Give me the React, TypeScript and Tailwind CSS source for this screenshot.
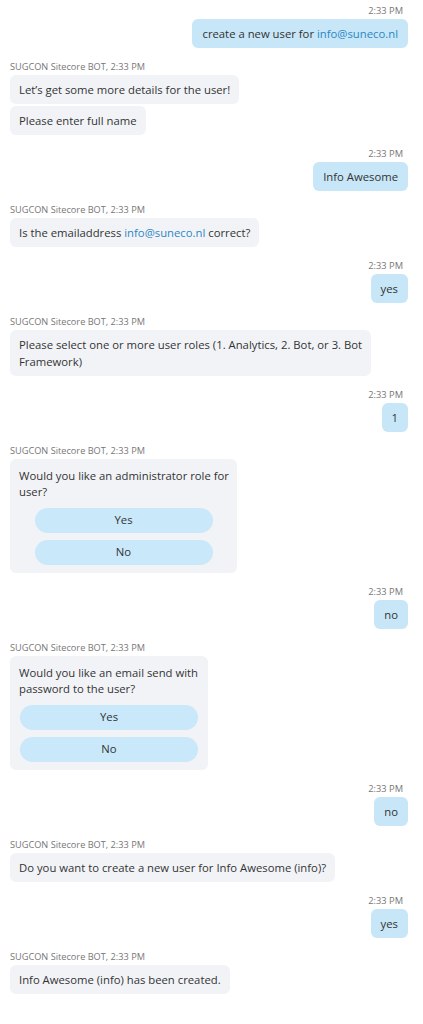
import React from 'react'

const Stamp = () => (
  <div className="text-[9.3px] leading-[14px] text-[#777] pr-[5px]">2:33 PM</div>
)

const Label = () => (
  <div className="text-[9.2px] leading-[14px] text-[#777]">SUGCON Sitecore BOT, 2:33 PM</div>
)

const UserMsg = ({ children }: { children: React.ReactNode }) => (
  <div className="flex flex-col items-end pr-[15px] mt-[12px] first:mt-0">
    <Stamp />
    <div className="mt-[1px] bg-[#c7e6f7] rounded-[6px] px-[10px] py-[6px] leading-[17px] whitespace-nowrap">
      {children}
    </div>
  </div>
)

const BotMsg = ({ children }: { children: React.ReactNode }) => (
  <div className="flex flex-col items-start pl-[10px] mt-[12px]">
    <Label />
    <div className="mt-[1px] flex flex-col items-start gap-[2px]">{children}</div>
  </div>
)

const Bubble = ({ children }: { children: React.ReactNode }) => (
  <div className="bg-[#f2f3f7] rounded-[6px] px-[9px] py-[6px] leading-[17px] whitespace-nowrap">{children}</div>
)

const Choice = ({ text, width }: { text: React.ReactNode; width: string }) => (
  <div className={`bg-[#f2f3f7] rounded-[6px] px-[9px] pt-[9px] pb-[8px] flex flex-col ${width}`}>
    <p className="leading-[16px] whitespace-nowrap">{text}</p>
    <button className="mt-[8px] h-[25px] w-[178px] self-center rounded-full bg-[#c9e8fa] text-[#333]">Yes</button>
    <button className="mt-[7px] h-[25px] w-[178px] self-center rounded-full bg-[#c9e8fa] text-[#333]">No</button>
  </div>
)

const Link = ({ children }: { children: React.ReactNode }) => (
  <span className="text-[#2a87c6]">{children}</span>
)

export default function App() {
  return (
    <div className="w-[423px] min-h-[1024px] bg-white pt-[4px] text-[11.3px] text-[#333] font-['Open_Sans',sans-serif]">
      <UserMsg>
        create a new user for <Link>info@suneco.nl</Link>
      </UserMsg>

      <BotMsg>
        <Bubble>Let’s get some more details for the user!</Bubble>
        <Bubble>Please enter full name</Bubble>
      </BotMsg>

      <UserMsg>Info Awesome</UserMsg>

      <BotMsg>
        <Bubble>
          Is the emailaddress <Link>info@suneco.nl</Link> correct?
        </Bubble>
      </BotMsg>

      <UserMsg>yes</UserMsg>

      <BotMsg>
        <Bubble>
          Please select one or more user roles (1. Analytics, 2. Bot, or 3. Bot
          <br />
          Framework)
        </Bubble>
      </BotMsg>

      <UserMsg>1</UserMsg>

      <BotMsg>
        <Choice
          width="w-[227px]"
          text={
            <>
              Would you like an administrator role for
              <br />
              user?
            </>
          }
        />
      </BotMsg>

      <UserMsg>no</UserMsg>

      <BotMsg>
        <Choice
          width="w-[198px]"
          text={
            <>
              Would you like an email send with
              <br />
              password to the user?
            </>
          }
        />
      </BotMsg>

      <UserMsg>no</UserMsg>

      <BotMsg>
        <Bubble>Do you want to create a new user for Info Awesome (info)?</Bubble>
      </BotMsg>

      <UserMsg>yes</UserMsg>

      <BotMsg>
        <Bubble>Info Awesome (info) has been created.</Bubble>
      </BotMsg>
    </div>
  )
}
